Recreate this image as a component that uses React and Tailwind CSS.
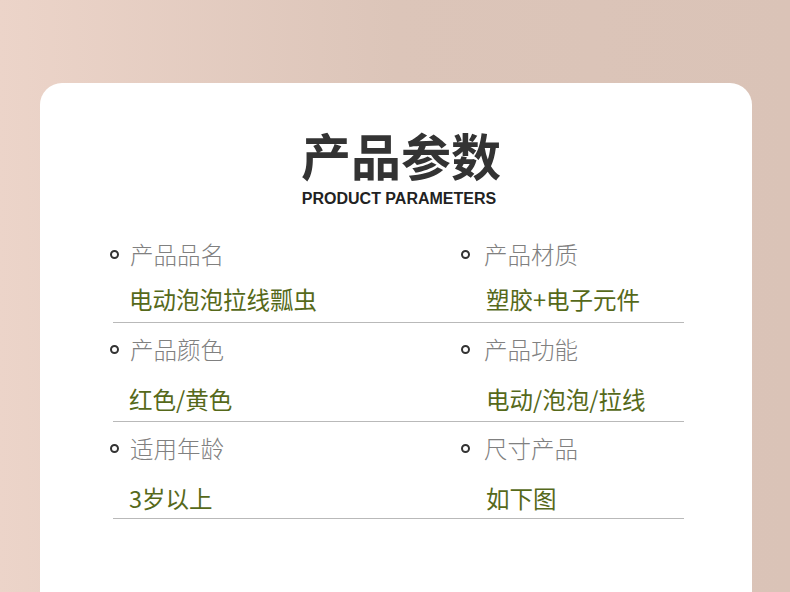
export default function App() {
  const rows = [
    [
      ["产品品名", "电动泡泡拉线瓢虫"],
      ["产品材质", "塑胶+电子元件"],
    ],
    [
      ["产品颜色", "红色/黄色"],
      ["产品功能", "电动/泡泡/拉线"],
    ],
    [
      ["适用年龄", "3岁以上"],
      ["尺寸产品", "如下图"],
    ],
  ];
  const cjk = { fontFamily: '"Noto Sans CJK SC", "Noto Sans", sans-serif' };
  const Cell = ({ label, value, right, first }) => (
    <div className="flex flex-col">
      <div className="flex items-center h-[30px]">
        <span className="w-[9px] h-[9px] rounded-full border-2 border-[#333] -ml-[3px] shrink-0" />
        <span className={`text-[23.5px] leading-[30px] text-[#808080] font-light ${right ? "ml-[14px]" : "ml-[11px]"}`}>{label}</span>
      </div>
      <div className={`${first ? "mt-[15px]" : "mt-[20px]"} h-[30px] text-[23.5px] leading-[30px] text-[#56691a] ${right ? "ml-[22px]" : "ml-[16px]"}`}>{value}</div>
    </div>
  );
  const rowCls = [
    "pt-[15px] h-[99px]",
    "pt-[11px] h-[99px]",
    "pt-[11px] h-[97px]",
  ];
  return (
    <div className="w-[790px] h-[592px] overflow-hidden bg-gradient-to-r from-[#ecd4c9] via-[#dcc5b9] to-[#dac3b7]" style={cjk}>
      <div className="pt-[83px] pl-[40px]">
        <div className="w-[712px] h-[540px] bg-white rounded-t-[22px] flex flex-col">
          <div className="mt-[46px] text-center h-[50px] leading-[50px] text-[50px] font-bold text-[#333] pl-[10px]">产品参数</div>
          <div className="mt-[12px] text-center h-[16px] leading-[16px] text-[16px] font-bold text-[#222] pl-[6px]" style={{ fontFamily: '"Liberation Sans", Arial, sans-serif' }}>PRODUCT PARAMETERS</div>
          <div className="ml-[73px] w-[571px] mt-[17px]">
            {rows.map((r, i) => (
              <div key={i} className={`grid grid-cols-[351px_1fr] border-b border-[#b9b9b9] ${rowCls[i]}`}>
                <Cell label={r[0][0]} value={r[0][1]} first={i === 0} />
                <Cell label={r[1][0]} value={r[1][1]} right first={i === 0} />
              </div>
            ))}
          </div>
        </div>
      </div>
    </div>
  );
}
